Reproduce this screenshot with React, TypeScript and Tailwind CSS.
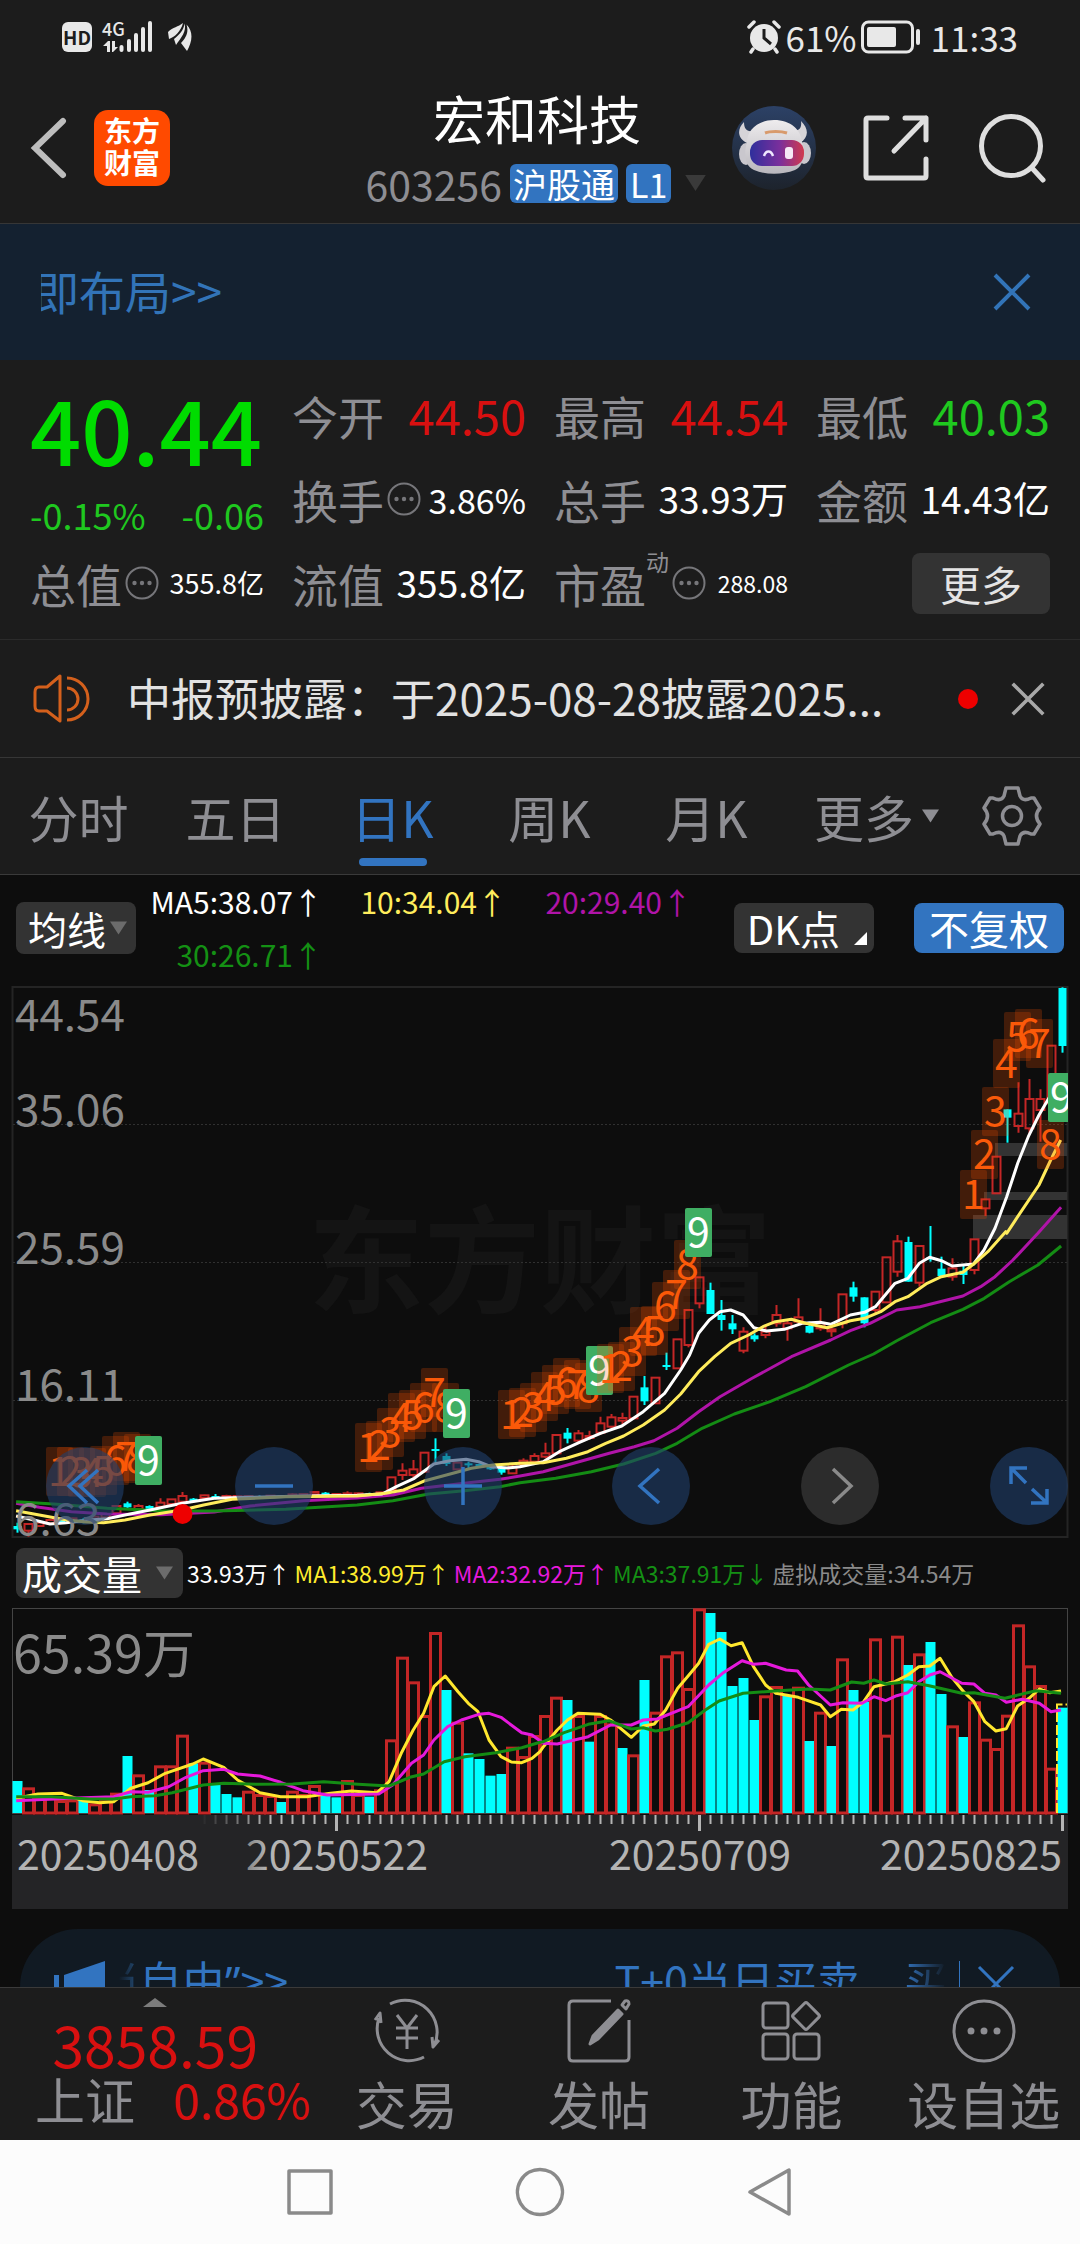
import React from "react";

/* ---------- chart data ---------- */

type Seg = { x: number; y: number; k: number; pts: number[][] };

// Turns line segments (origin, horizontal scale, points) into one SVG path.
const toPath = (segs: Seg[]) =>
  segs
    .flatMap((s) => s.pts.map(([px, py]) => [s.x + px / s.k, s.y + py / 3]))
    .map(([x, y], i) => `${i ? "L" : "M"}${x.toFixed(1)} ${y.toFixed(1)}`)
    .join("");

const A = (pts: number[][]): Seg => ({ x: 0, y: 1160, k: 2.8, pts });
const B = (pts: number[][]): Seg => ({ x: 520, y: 1160, k: 2.8, pts });
const C = (pts: number[][]): Seg => ({ x: 780, y: 970, k: 3, pts });
const D = (pts: number[][]): Seg => ({ x: 0, y: 1540, k: 2.904, pts });
const E = (pts: number[][]): Seg => ({ x: 540, y: 1540, k: 2.904, pts });

const priceLines = [
  {
    color: "#b014a8",
    d: toPath([
      A([[45, 1030], [110, 1042], [200, 1055], [300, 1062], [450, 1064], [600, 1056], [700, 1038], [850, 1022], [1000, 1014], [1100, 1005], [1180, 985], [1300, 970], [1400, 958]]),
      B([[0, 948], [65, 935], [150, 910], [250, 880], [320, 860], [375, 842], [440, 805], [500, 755], [560, 710], [650, 655], [760, 590], [870, 540], [925, 512], [980, 490], [1055, 450], [1120, 440], [1240, 408], [1290, 380], [1330, 350], [1380, 300], [1450, 220], [1515, 142]]),
    ]),
  },
  {
    color: "#148c14",
    d: toPath([
      A([[45, 1025], [150, 1032], [300, 1045], [450, 1052], [600, 1053], [800, 1048], [1000, 1035], [1100, 1022], [1200, 1002], [1300, 992], [1400, 980]]),
      B([[0, 968], [100, 955], [200, 935], [290, 912], [380, 880], [440, 850], [510, 805], [600, 762], [700, 725], [800, 680], [920, 615], [990, 582], [1055, 542], [1150, 488], [1240, 448], [1300, 415], [1370, 365], [1450, 315], [1515, 258]]),
    ]),
  },
  {
    color: "#ffffff",
    d: toPath([
      A([[45, 1068], [95, 1080], [140, 1092], [185, 1088], [250, 1080], [300, 1076], [350, 1065], [420, 1050], [510, 1030], [600, 1015], [700, 1012], [850, 1008], [1000, 1006], [1070, 1002], [1110, 980], [1160, 955], [1215, 912], [1260, 902], [1305, 898], [1340, 905], [1375, 920], [1420, 924]]),
      B([[0, 920], [65, 905], [110, 875], [165, 848], [225, 820], [285, 798], [345, 755], [405, 700], [450, 630], [475, 585], [500, 520], [530, 480], [560, 455], [590, 450], [625, 465], [655, 503], [690, 513], [740, 508], [790, 490], [840, 487], [870, 493], [925, 465], [965, 457], [995, 440], [1050, 370], [1086, 355], [1118, 310], [1147, 292], [1180, 302], [1210, 318], [1270, 312]]),
      C([[612, 840], [645, 775], [680, 680], [713, 580], [745, 500], [777, 435], [815, 370]]),
    ]),
  },
  {
    color: "#ffec5c",
    d: toPath([
      A([[45, 1052], [110, 1065], [175, 1078], [240, 1086], [290, 1088], [350, 1080], [420, 1065], [510, 1050], [570, 1035], [650, 1018], [800, 1010], [1000, 1008], [1080, 1000], [1130, 990], [1190, 962], [1250, 945], [1320, 925], [1380, 915]]),
      B([[0, 910], [65, 908], [130, 895], [190, 875], [240, 850], [290, 828], [345, 795], [405, 750], [450, 702], [500, 635], [545, 590], [590, 550], [640, 525], [680, 500], [715, 485], [760, 478], [800, 490], [860, 503], [925, 482], [965, 475], [1010, 455], [1050, 425], [1086, 410], [1140, 370], [1180, 350], [1240, 337], [1270, 312], [1310, 275], [1360, 215]]),
      C([[680, 790], [713, 740], [777, 645], [812, 570], [842, 510]]),
    ]),
  },
];

const volumeLines = [
  {
    color: "#ffe72e",
    d: toPath([
      D([[47, 775], [110, 762], [180, 760], [240, 782], [290, 788], [330, 785], [380, 745], [430, 728], [480, 700], [560, 672], [590, 657], [650, 682], [690, 720], [755, 758], [815, 770], [890, 770], [960, 760], [1020, 753], [1095, 758], [1130, 725], [1165, 640], [1200, 570], [1230, 520], [1260, 440], [1293, 408], [1330, 455], [1360, 490], [1388, 515], [1420, 600], [1455, 650], [1485, 666], [1515, 668], [1545, 655]]),
      E([[0, 635], [10, 620], [50, 570], [80, 540], [110, 520], [175, 523], [205, 540], [265, 592], [300, 558], [332, 552], [365, 510], [400, 445], [430, 408], [461, 370], [490, 313], [522, 297], [555, 317], [587, 308], [620, 380], [655, 435], [685, 460], [750, 472], [815, 495], [843, 530], [875, 508], [909, 510], [940, 485], [970, 440], [1030, 425], [1068, 405], [1100, 380], [1132, 378], [1162, 355], [1196, 412], [1230, 455], [1260, 485], [1292, 545], [1324, 573], [1354, 566], [1387, 498], [1420, 475], [1450, 447], [1480, 458], [1513, 453]]),
    ]),
  },
  {
    color: "#e619dc",
    d: toPath([
      D([[47, 782], [200, 775], [330, 770], [380, 755], [430, 757], [490, 740], [540, 712], [590, 692], [650, 688], [690, 702], [755, 708], [815, 727], [880, 752], [950, 765], [1100, 762], [1140, 735], [1195, 670], [1230, 645], [1260, 600], [1300, 560], [1340, 540], [1390, 523], [1420, 520], [1455, 532], [1515, 578], [1545, 585]]),
      E([[0, 602], [10, 610], [50, 612], [140, 590], [205, 555], [265, 555], [300, 540], [340, 537], [430, 500], [490, 435], [530, 400], [587, 362], [620, 373], [655, 370], [715, 390], [748, 393], [780, 435], [843, 495], [880, 488], [935, 490], [970, 470], [1004, 482], [1036, 467], [1068, 458], [1100, 425], [1132, 405], [1162, 395], [1225, 430], [1260, 432], [1292, 460], [1324, 465], [1354, 487], [1400, 478], [1450, 490], [1484, 515], [1513, 510]]),
    ]),
  },
  {
    color: "#148c14",
    d: toPath([
      D([[47, 770], [150, 770], [260, 777], [330, 777], [380, 770], [450, 767], [500, 758], [590, 735], [650, 730], [750, 733], [850, 732], [940, 725], [1040, 733], [1130, 738], [1190, 712], [1230, 702], [1290, 665], [1350, 650], [1440, 638], [1515, 623]]),
      E([[0, 607], [10, 605], [70, 578], [140, 553], [200, 542], [265, 567], [300, 563], [335, 573], [370, 568], [430, 548], [480, 510], [520, 483], [590, 460], [680, 453], [780, 447], [843, 450], [905, 426], [940, 430], [970, 420], [1005, 432], [1068, 425], [1130, 437], [1225, 460], [1260, 458], [1350, 475], [1440, 452], [1513, 460]]),
    ]),
  },
];

// [kind, high, body top, body bottom, low]; r = rising, c = falling
type Candle = [string, number, number, number, number];
const candles: Candle[] = [
  ["c", 1088, 1098, 1108, 1118], ["r", 1092, 1092, 1112, 1130], ["r", 1085, 1088, 1098, 1100], ["r", 1078, 1080, 1090, 1092],
  ["c", 1078, 1080, 1090, 1092], ["r", 1073, 1075, 1085, 1088], ["c", 1074, 1078, 1087, 1090], ["r", 1070, 1070, 1080, 1082],
  ["r", 1060, 1062, 1072, 1074], ["r", 1038, 1038, 1060, 1060], ["c", 1025, 1030, 1042, 1044], ["r", 1032, 1038, 1048, 1050],
  ["c", 1036, 1038, 1048, 1050], ["r", 1015, 1028, 1040, 1042], ["r", 1018, 1018, 1032, 1032], ["r", 996, 1008, 1025, 1026],
  ["c", 1014, 1016, 1024, 1026], ["r", 1004, 1006, 1014, 1016], ["c", 1002, 1008, 1014, 1018], ["r", 1004, 1008, 1014, 1016],
  ["r", 1006, 1008, 1014, 1016], ["r", 1006, 1008, 1013, 1014], ["c", 1006, 1008, 1013, 1014], ["r", 1005, 1007, 1012, 1014],
  ["c", 1005, 1007, 1012, 1014], ["r", 1000, 1003, 1010, 1012], ["r", 1000, 1002, 1009, 1010], ["r", 994, 996, 1003, 1005],
  ["c", 996, 998, 1004, 1006], ["r", 1000, 1002, 1008, 1010], ["r", 994, 1000, 1006, 1008], ["r", 998, 1000, 1006, 1008],
  ["c", 998, 1000, 1006, 1008], ["r", 995, 997, 1003, 1005], ["r", 952, 952, 990, 990], ["r", 910, 932, 945, 960],
  ["r", 900, 928, 945, 955], ["r", 878, 878, 935, 935], ["c", 835, 867, 873, 910], ["c", 880, 888, 912, 918],
  ["r", 906, 908, 928, 930], ["c", 905, 910, 916, 925], ["c", 910, 912, 920, 922], ["c", 915, 918, 928, 930],
  ["c", 920, 926, 938, 944], ["r", 915, 920, 940, 940], ["r", 895, 902, 915, 915], ["r", 880, 888, 905, 910],
  ["r", 848, 880, 890, 895], ["r", 825, 825, 880, 880], ["c", 804, 818, 836, 850], ["r", 810, 820, 842, 850],
  ["r", 812, 828, 834, 840], ["r", 770, 790, 818, 825], ["r", 762, 772, 800, 805], ["r", 758, 774, 782, 792],
  ["r", 710, 710, 775, 775], ["c", 648, 682, 724, 735], ["r", 653, 653, 730, 730], ["c", 578, 615, 621, 630],
  ["r", 538, 538, 625, 625], ["r", 450, 450, 555, 562], ["r", 352, 352, 430, 445], ["c", 368, 390, 462, 462],
  ["c", 420, 465, 480, 512], ["c", 465, 490, 508, 522], ["r", 502, 515, 572, 580], ["c", 520, 526, 538, 545],
  ["r", 495, 515, 525, 535], ["r", 435, 465, 490, 500], ["r", 480, 490, 505, 542], ["r", 415, 472, 485, 495],
  ["c", 485, 498, 518, 520], ["r", 445, 490, 505, 512], ["r", 490, 508, 514, 530], ["r", 403, 403, 490, 505],
  ["c", 365, 382, 410, 425], ["c", 412, 412, 490, 502], ["r", 395, 395, 450, 460], ["r", 292, 292, 427, 427],
  ["r", 225, 244, 335, 350], ["c", 230, 246, 365, 365], ["r", 258, 258, 368, 380], ["c", 198, 292, 298, 305],
  ["c", 290, 326, 348, 350], ["r", 295, 325, 350, 362], ["c", 318, 332, 345, 372], ["r", 238, 238, 330, 343],
  ["r", 118, 118, 145, 168], ["r", -10, -10, 100, 100], ["c", -152, -152, -127, -52], ["r", -233, -139, -102, -82],
  ["r", -243, -183, -95, -80], ["r", -212, -183, -150, -55], ["r", -343, -343, -170, -170], ["c", -518, -516, -342, -322],
];

const volumes =
  "c723 r742 r770 r772 r780 r778 c780 r790 r778 r758 c648 r703 c750 r676 r676 r584 c670 r665 c735 c762 c772 r752 r762 r765 c786 r752 r762 r735 c768 c772 r720 r762 c770 r748 r598 r350 r424 r525 r276 c450 r545 c640 c657 c707 c702 r620 r648 r585 r525 r470 c480 r525 c605 r525 r550 c624 r643 c420 r515 r346 r334 r444 r205 c219 c276 c438 c414 c540 r466 r438 c465 r440 c603 r515 c618 r355 c450 c485 r295 r584 r287 c375 r340 c306 c462 r556 c591 r484 r596 r624 r524 r253 r376 r435 r683 c503"
    .split(" ")
    .map((v) => ({ up: v[0] === "r", y: 1540 + Number(v.slice(1)) / 3 }));

// [label, left, top]
const marks: [string, number, number][] = [
  ["1", 46, 1447], ["2", 57, 1447], ["3", 68, 1448], ["4", 79, 1448], ["5", 90, 1446], ["6", 102, 1436], ["7", 113, 1432], ["8", 124, 1434], ["9", 135, 1436],
  ["1", 355, 1423], ["2", 366, 1421], ["3", 377, 1408], ["4", 388, 1393], ["5", 399, 1390], ["6", 410, 1383], ["7", 421, 1368], ["8", 432, 1383], ["9", 443, 1389],
  ["1", 498, 1390], ["2", 509, 1388], ["3", 520, 1383], ["4", 531, 1372], ["5", 542, 1365], ["6", 553, 1358], ["7", 564, 1360], ["8", 575, 1363], ["9", 586, 1346],
  ["1", 597, 1344], ["2", 608, 1342], ["3", 619, 1327], ["4", 630, 1307], ["5", 641, 1306], ["6", 652, 1282], ["7", 663, 1270], ["8", 674, 1240], ["9", 685, 1208],
  ["1", 960, 1170], ["2", 971, 1130], ["3", 982, 1087], ["4", 993, 1039], ["5", 1004, 1012], ["6", 1015, 1009], ["7", 1026, 1019], ["8", 1037, 1120], ["9", 1048, 1073],
];

const barX = (i: number) => 17.5 + i * 11;

/* ---------- small pieces ---------- */

const Down = ({ className }: { className: string }) => (
  <svg viewBox="0 0 18 14" className={className} aria-hidden="true">
    <path d="M0 0H18L9 14Z" fill="currentColor" />
  </svg>
);

const Cross = ({ className, w }: { className: string; w: number }) => (
  <svg viewBox="0 0 40 40" className={className} aria-hidden="true">
    <path d="M3 3L37 37M37 3L3 37" stroke="currentColor" strokeWidth={w} fill="none" />
  </svg>
);

const Info = () => (
  <svg viewBox="0 0 34 34" className="ml-[3px] size-[34px] shrink-0 text-[#76767a]" aria-hidden="true">
    <circle cx="17" cy="17" r="15.5" fill="none" stroke="currentColor" strokeWidth="2" />
    <circle cx="9.500" cy="17" r="2.200" fill="currentColor" />
    <circle cx="17" cy="17" r="2.200" fill="currentColor" />
    <circle cx="24.500" cy="17" r="2.200" fill="currentColor" />
  </svg>
);

function Cell({ label, value, tone = "text-white text-[37px]", info, sup }: { label: string; value: string; tone?: string; info?: boolean; sup?: string }) {
  return (
    <div className="flex items-center justify-between">
      <span className="flex items-center whitespace-nowrap text-[46px] text-[#8e8e93]">
        {label}
        {sup && <sup className="top-0 self-start text-[23px] leading-6">{sup}</sup>}
        {info && <Info />}
      </span>
      <span className={`whitespace-nowrap ${tone}`}>{value}</span>
    </div>
  );
}

function StatusBar() {
  return (
    <div className="flex h-[73px] items-center justify-between pl-[62px] pr-[62px] text-[35px] leading-[48px] text-[#e8e8e8]">
      <div className="flex items-center">
        <span className="flex size-[30px] items-center justify-center rounded-md bg-[#e8e8e8] text-[19px] font-bold leading-none text-[#1c1c1c]">HD</span>
        <svg viewBox="103 20 50 34" className="ml-[11px] h-[34px] w-[50px] overflow-visible" aria-label="4G 信号">
          <text x="102" y="36" fontSize="18" fontWeight="500" fill="#e8e8e8">4G</text>
          <g fill="#e8e8e8">
            <path d="M103 46L108 41H110V52H107V46Z M112 41H115V47H118L113 52H112Z" />
            <rect x="119.500" y="45" width="4" height="7" rx="2" />
            <rect x="127" y="39" width="4" height="13" rx="2" />
            <rect x="134" y="33" width="4" height="19" rx="2" />
            <rect x="141" y="27" width="4" height="25" rx="2" />
            <rect x="148" y="21" width="4" height="31" rx="2" />
          </g>
        </svg>
        <svg viewBox="0 0 26 30" className="ml-[14px] h-[30px] w-[26px]" fill="#e8e8e8" aria-hidden="true">
          <path d="M1 10C6 5 11 5 16 1C14 9 8 15 2 17Z" />
          <path d="M17.500 1.500C20 9 14 16 9 23L7 17C12 13 17 8 17.500 1.500Z" />
          <path d="M19.500 2.500C27 10 25 20 20 29L14 21C19 16 22 10 19.500 2.500Z" />
        </svg>
      </div>
      <div className="flex items-center">
        <svg viewBox="0 0 34 34" className="size-[34px]" aria-label="闹钟">
          <circle cx="17" cy="18" r="14" fill="#e8e8e8" />
          <path d="M2 7L7 2M32 7L27 2M6 29L4 32M28 29L30 32" stroke="#e8e8e8" strokeWidth="3.500" strokeLinecap="round" />
          <path d="M17 9V18L24 24" stroke="#1c1c1c" strokeWidth="3" fill="none" />
        </svg>
        <span className="ml-1">61%</span>
        <svg viewBox="0 0 60 34" className="ml-1 h-[34px] w-[60px]" aria-label="电池">
          <rect x="1.500" y="2" width="50" height="30" rx="6" fill="none" stroke="#e8e8e8" strokeWidth="3" />
          <rect x="6" y="7" width="29" height="20" rx="2" fill="#e8e8e8" />
          <rect x="55" y="9" width="4" height="16" rx="2" fill="#e8e8e8" />
        </svg>
        <span className="ml-[10px]">11:33</span>
      </div>
    </div>
  );
}

function Robot() {
  return (
    <svg viewBox="0 0 84 84" className="size-[84px]" aria-hidden="true">
      <defs>
        <linearGradient id="sky" x1="0" y1="0" x2="0" y2="1"><stop offset="0" stopColor="#2c4166" /><stop offset="1" stopColor="#1d232c" /></linearGradient>
        <linearGradient id="visor" x1="0" y1="0" x2="1" y2="0"><stop offset="0" stopColor="#2f2f9c" /><stop offset="0.550" stopColor="#7a2f9c" /><stop offset="1" stopColor="#d0394e" /></linearGradient>
        <linearGradient id="fur" x1="0" y1="0" x2="0" y2="1"><stop offset="0" stopColor="#eeecee" /><stop offset="1" stopColor="#b9b7bd" /></linearGradient>
      </defs>
      <circle cx="42" cy="42" r="42" fill="url(#sky)" />
      <path d="M12 16C5 23 5 32 15 37L24 24C16 27 12 24 12 16ZM69 15C77 23 77 31 68 37L59 24C67 26 70 22 69 15Z" fill="#d6d4d8" />
      <ellipse cx="14" cy="48" rx="7" ry="11" fill="#c9c7cd" />
      <ellipse cx="72" cy="47" rx="7" ry="11" fill="#c9c7cd" />
      <path d="M15 36C15 24 26 14 42 14C59 14 69 24 70 36C74 46 72 60 63 64C50 69 34 69 22 64C12 60 12 46 15 36Z" fill="url(#fur)" />
      <rect x="18" y="34" width="54" height="26" rx="12" fill="url(#visor)" />
      <path d="M32 50C34 44 39 44 41 50" fill="none" stroke="#f0e8ff" strokeWidth="2.500" />
      <rect x="53" y="41" width="8" height="12" rx="3" fill="#f5e8f5" />
      <path d="M33 27C38 25 49 25 55 27" stroke="#d89a6c" strokeWidth="3" fill="none" />
    </svg>
  );
}

function Header() {
  return (
    <header className="grid h-[151px] grid-cols-[1fr_auto_1fr] items-center border-b border-[#363636] pl-7 pr-[34px]">
      <div className="flex items-center gap-6">
        <button aria-label="返回" className="h-[62px] w-[42px]">
          <svg viewBox="0 0 42 62" className="h-full w-full"><path d="M35 4L7 31L35 58" fill="none" stroke="#bdbdbd" strokeWidth="6" strokeLinecap="round" /></svg>
        </button>
        <a href="#home" className="flex size-[76px] flex-col items-center justify-center rounded-[14px] bg-[#ff4a00] pb-1 text-[28px] font-bold leading-8 text-white">
          <span>东方</span>
          <span>财富</span>
        </a>
      </div>
      <div className="flex flex-col items-center">
        <h1 className="text-[52px] leading-[70px] text-white">宏和科技</h1>
        <div className="flex items-center">
          <span className="mr-2 text-[41px] leading-[60px] text-[#8e8e93]">603256</span>
          <span className="rounded-md bg-[#3274c0] px-[3px] text-[34px] leading-[39px] text-white">沪股通</span>
          <span className="ml-2 rounded-md bg-[#3274c0] px-1 text-[34px] leading-[39px] text-white">L1</span>
          <Down className="ml-3 h-4 w-[25px] text-[#3a3a3a]" />
        </div>
      </div>
      <div className="flex items-center justify-end">
        <button aria-label="智能助手"><Robot /></button>
        <button aria-label="分享" className="ml-[46px]">
          <svg viewBox="0 0 68 68" className="size-[68px]" fill="none" stroke="#dedede" strokeWidth="5" strokeLinecap="round" strokeLinejoin="round">
            <path d="M25 4H6Q4 4 4 6V62Q4 64 6 64H62Q64 64 64 62V45M43 4H64V26M64 4L32 37" />
          </svg>
        </button>
        <button aria-label="搜索" className="ml-12">
          <svg viewBox="0 0 68 70" className="h-[70px] w-[68px]" fill="none" stroke="#dedede" strokeWidth="5" strokeLinecap="round">
            <circle cx="33" cy="33" r="29.5" /><path d="M54 55L65 67" />
          </svg>
        </button>
      </div>
    </header>
  );
}

function Quote() {
  return (
    <section className="grid auto-rows-[84px] grid-cols-4 gap-x-7 border-b border-[#2b2b2b] px-[30px] pb-[14px] pt-[13px]">
      <div className="row-span-2 flex flex-col items-start">
        <strong className="text-[90px] font-medium leading-[108px] text-[#00dc00]">40.44</strong>
        <div className="mt-2 flex w-full justify-between text-[36px] leading-[50px] text-[#1fc81f]">
          <span>-0.15%</span>
          <span>-0.06</span>
        </div>
      </div>
      <Cell label="今开" value="44.50" tone="text-[47px] text-[#d81010]" />
      <Cell label="最高" value="44.54" tone="text-[47px] text-[#d81010]" />
      <Cell label="最低" value="40.03" tone="text-[47px] text-[#1fc81f]" />
      <Cell label="换手" value="3.86%" tone="text-[34px] text-white" info />
      <Cell label="总手" value="33.93万" />
      <Cell label="金额" value="14.43亿" />
      <Cell label="总值" value="355.8亿" tone="text-[27px] text-white" info />
      <Cell label="流值" value="355.8亿" />
      <Cell label="市盈" value="288.08" tone="text-[23px] text-white" sup="动" info />
      <div className="flex items-center justify-end">
        <button className="rounded-lg bg-[#333333] px-7 text-[41px] leading-[61px] text-[#e4e4e4]">更多</button>
      </div>
    </section>
  );
}

function Notice() {
  return (
    <section className="flex h-[118px] items-center border-b border-[#363636] pl-[33px] pr-[34px]">
      <svg viewBox="0 0 58 50" className="h-[50px] w-[58px] shrink-0" fill="none" stroke="#d4601c" strokeWidth="3" aria-hidden="true">
        <path d="M27 2V47L14 37H6Q2 37 2 32V18Q2 13 6 13H14ZM34 4A21 21 0 0 1 34 46M34 14A11 11 0 0 1 34 36" strokeLinejoin="round" />
      </svg>
      <a href="#notice" className="ml-9 whitespace-nowrap pb-1 text-[44px] text-[#e2e2e2]">中报预披露：于2025-08-28披露2025...</a>
      <span className="ml-auto size-5 shrink-0 rounded-full bg-[#ee0000]" />
      <button aria-label="关闭公告" className="ml-8"><Cross className="size-9 text-[#a8a8a8]" w={4} /></button>
    </section>
  );
}

function Tabs() {
  return (
    <nav className="grid h-[117px] grid-cols-[repeat(5,157fr)_183fr_112fr] border-b border-[#3a3a3a] text-[50px] text-[#8e8e93]">
      {["分时", "五日", "日K", "周K", "月K"].map((t) => (
        <button key={t} className={t === "日K" ? "relative text-[#3274c0]" : "relative"}>
          {t}
          {t === "日K" && <span className="absolute bottom-2 left-1/2 h-2 w-[68px] -translate-x-1/2 rounded bg-[#3274c0]" />}
        </button>
      ))}
      <button className="flex items-center justify-center gap-2">
        更多
        <Down className="h-[14px] w-[17px]" />
      </button>
      <button aria-label="设置" className="flex items-center pl-3">
        <svg viewBox="-32 -32 64 64" className="size-16" fill="none" stroke="#8e8e93" strokeWidth="3.500" strokeLinejoin="round">
          <path d="M-6-28H6L8-20Q11-14 19-18L22-18L28-8Q21 0 28 8L22 18L19 18Q11 14 8 20L6 28H-6L-8 20Q-11 14-19 18L-22 18L-28 8Q-21 0-28-8L-22-18L-19-18Q-11-14-8-20Z" />
          <circle r="9.5" />
        </svg>
      </button>
    </nav>
  );
}

function Averages() {
  return (
    <div className="flex items-center pb-[5px] pl-4 pr-4">
      <button className="flex items-center gap-1 rounded-lg bg-[#333333] pl-3 pr-[9px] text-[39px] leading-[52px] text-white">
        均线
        <Down className="h-[14px] w-[17px] text-[#6c6c6c]" />
      </button>
      <div className="grid grid-cols-[187px_184px_185px] text-right text-[30px] leading-[53px]">
        <span className="text-white">MA5:38.07↑</span>
        <span className="text-[#ffec5c]">10:34.04↑</span>
        <span className="text-[#b014a8]">20:29.40↑</span>
        <span className="text-[#149014]">30:26.71↑</span>
      </div>
      <button className="relative ml-auto rounded-lg bg-[#333333] pl-[13px] pr-[34px] text-[40px] leading-[50px] text-white">
        DK点
        <svg viewBox="0 0 13 13" className="absolute bottom-2 right-[7px] size-[13px]" aria-hidden="true"><path d="M13 0V13H0Z" fill="#fff" /></svg>
      </button>
      <button className="ml-10 rounded-lg bg-[#3274c0] px-[15px] text-[40px] leading-[50px] text-white">不复权</button>
    </div>
  );
}

function PriceChart() {
  return (
    <svg viewBox="0 986 1080 552" className="block h-auto w-full" role="img" aria-label="日K线图">
      <rect x="12.500" y="987" width="1055" height="550" fill="none" stroke="#242424" strokeWidth="2" />
      <text x="540" y="1304" fontSize="116" fontWeight="700" textAnchor="middle" fill="#141414">东方财富</text>
      {[1124.5, 1262.5, 1400.5].map((y) => (
        <path key={y} d={`M13 ${y}H1067`} stroke="#303030" strokeDasharray="2 2" />
      ))}
      <g fill="#333333">
        <rect x="995" y="1143" width="72" height="13" />
        <rect x="984" y="1192" width="83" height="8" />
        <rect x="973" y="1215" width="94" height="24" />
      </g>
      {candles.map(([kind, hi, top, bottom, lo], i) => {
        const x = barX(i);
        const [h, t, b, l] = [hi, top, bottom, lo].map((v) => 1160 + v / 3);
        return kind === "c" ? (
          <g key={i} fill="#00ffff">
            <rect x={x - 1} y={h} width="2" height={l - h} />
            <rect x={x - 4} y={t} width="8" height={Math.max(b - t, 2)} />
          </g>
        ) : (
          <g key={i} stroke="#c42626" strokeWidth="2" fill="none">
            <path d={`M${x} ${h}V${t}M${x} ${b}V${l}`} />
            <rect x={x - 4} y={t} width="8" height={Math.max(b - t, 1)} />
          </g>
        );
      })}
      {priceLines.map((l) => (
        <path key={l.color} d={l.d} fill="none" stroke={l.color} strokeWidth="3" strokeLinejoin="round" />
      ))}
      <g fontSize="44" fill="#8a8a8a">
        <text x="15" y="1031">44.54</text>
        <text x="15" y="1126">35.06</text>
        <text x="15" y="1264">25.59</text>
        <text x="15" y="1401">16.11</text>
        <text x="15" y="1535">6.63</text>
      </g>
      <clipPath id="frame"><rect x="12" y="986" width="1056" height="552" /></clipPath>
      <g clipPath="url(#frame)" fontSize="41" textAnchor="middle">
        {marks.map(([n, x, y], i) => (
          <g key={i}>
            <rect x={x} y={y} width="27" height="49" rx="2" fill={n === "9" ? "#3fae63" : "#ff5000"} fillOpacity={n === "9" ? 1 : 0.22} />
            <text x={x + 13.5} y={y + 39} fill={n === "9" ? "#ffffff" : "#fa5a0a"}>{n}</text>
          </g>
        ))}
      </g>
      <circle cx="182.500" cy="1514" r="10" fill="#ee0000" />
    </svg>
  );
}

function ChartControls() {
  const items = [
    { name: "最早", d: "M41 23L23 39L41 56M52 23L34 39L52 56" },
    { name: "缩小", d: "M20 39H58" },
    { name: "放大", d: "M20 39H58M39 20V58" },
    { name: "向左", d: "M47 22L28 39L47 56" },
    { name: "向右", d: "M32 22L50 39L32 56", off: true },
    { name: "全屏", d: "M21 37V21H37M21 21L36 36M57 42V56H41M57 56L42 42" },
  ];
  return (
    <div className="absolute inset-x-0 bottom-[13px] flex justify-between pl-[46px] pr-3">
      {items.map((it) => (
        <button key={it.name} aria-label={it.name} className={it.off ? "size-[78px] rounded-full bg-[#2c2c2c] text-[#8a8a8a]" : "size-[78px] rounded-full bg-[#20406d]/60 text-[#3274c0]"}>
          <svg viewBox="0 0 78 78" className="h-full w-full"><path d={it.d} fill="none" stroke="currentColor" strokeWidth="3.500" /></svg>
        </button>
      ))}
    </div>
  );
}

function VolumeHeader() {
  return (
    <div className="flex h-[70px] items-center gap-1 whitespace-nowrap pl-4 text-[23px]">
      <button className="flex items-center rounded-lg bg-[#333333] pl-[6px] pr-[10px] text-[40px] leading-[50px] text-white">
        成交量
        <Down className="ml-[14px] h-[14px] w-[17px] text-[#6c6c6c]" />
      </button>
      <span className="text-white">33.93万↑</span>
      <span className="text-[#ffec2e]">MA1:38.99万↑</span>
      <span className="text-[#e619dc]">MA2:32.92万↑</span>
      <span className="text-[#149014]">MA3:37.91万↓</span>
      <span className="text-[#8a8a8a]">虚拟成交量:34.54万</span>
    </div>
  );
}

function VolumeChart() {
  return (
    <svg viewBox="0 1608 1080 302" className="block h-auto w-full" role="img" aria-label="成交量图">
      <defs>
        <linearGradient id="fade" x1="0" y1="0" x2="1" y2="0"><stop offset="0" stopColor="#242426" /><stop offset="1" stopColor="#242426" stopOpacity="0" /></linearGradient>
      </defs>
      <rect x="12.500" y="1608.500" width="1055" height="205" fill="none" stroke="#444444" />
      {volumes.map((v, i) => {
        const x = barX(i);
        return v.up ? (
          <rect key={i} x={x - 5} y={v.y + 1.5} width="10" height={1811.5 - v.y} fill="none" stroke="#c42626" strokeWidth="3" />
        ) : (
          <rect key={i} x={x - 5} y={v.y} width="10" height={1813 - v.y} fill="#00ffff" />
        );
      })}
      <path d="M1057 1813V1704.500H1067" fill="none" stroke="#ffe72e" strokeWidth="2" strokeDasharray="10 3" />
      {volumeLines.map((l) => (
        <path key={l.color} d={l.d} fill="none" stroke={l.color} strokeWidth="3" strokeLinejoin="round" />
      ))}
      <text x="13" y="1673" fontSize="52" fill="#8a8a8a">65.39万</text>
      <rect x="12" y="1815" width="1056" height="94" fill="#242426" />
      {Array.from({ length: 79 }, (_, k) => {
        const i = k + 17;
        const major = i === 29 || i === 62 || i === 95;
        return <rect key={i} x={barX(i) - (major ? 1.5 : 1)} y="1815" width={major ? 3 : 2} height={major ? 16 : 9} fill="#b4b4b4" />;
      })}
      <g fontSize="41" fill="#b4b4b4">
        <text x="246" y="1870">20250522</text>
        <rect x="200" y="1815" width="68" height="94" fill="url(#fade)" />
        <text x="17" y="1870">20250408</text>
        <text x="609" y="1870">20250709</text>
        <text x="1062" y="1870" textAnchor="end">20250825</text>
      </g>
    </svg>
  );
}

function Promo() {
  return (
    <div className="mt-[19px] h-[58px] overflow-hidden px-5">
      <div className="flex h-[116px] items-start whitespace-nowrap rounded-[58px] bg-[#111a23] pl-[33px] pr-[44px] pt-6 text-[43px] leading-[52px] text-[#3274c0]">
        <svg viewBox="0 0 52 48" className="mt-2 h-12 w-[52px] shrink-0" fill="currentColor" aria-hidden="true">
          <rect x="1" y="14" width="5" height="34" /><path d="M11 14L52 0V48H11Z" />
        </svg>
        <a href="#promo" className="ml-[14px] flex min-w-0 flex-1 overflow-hidden">
          <span className="flex w-5 shrink-0 justify-end overflow-hidden bg-gradient-to-r from-[#111a23] to-[#23507f] bg-clip-text text-transparent">当</span>
          <span>自由<span className="font-['Noto_Sans',sans-serif]">”</span>&gt;&gt;</span>
          <span className="ml-auto">T+0当日买卖</span>
          <span className="ml-11 mr-3 bg-gradient-to-r from-[#3274c0] to-[#111a23] bg-clip-text text-transparent">买</span>
        </a>
        <span className="mt-2 h-20 w-px bg-[#3274c0]" />
        <button aria-label="关闭推广" className="ml-4 mt-2"><Cross className="h-[46px] w-10" w={3} /></button>
      </div>
    </div>
  );
}

function BottomBar() {
  const items = [
    {
      name: "交易",
      icon: (
        <>
          <path d="M18 8A32 32 0 0 1 62 50M52 61A32 32 0 0 1 7 22M3 24L8 17L9 27M67 44L61 51L60 41" />
          <path d="M25 19L35 32L45 19M35 32V53M24 32H46M24 42H46" />
        </>
      ),
    },
    {
      name: "发帖",
      icon: (
        <>
          <path d="M47 5H9Q5 5 5 9V61Q5 65 9 65H61Q65 65 65 61V24" />
          <path d="M58 9L61 5Q65 4 65 8L62 13Z" />
          <path d="M54 14L58 18L34 43L26 48L29 40Z" fill="currentColor" />
        </>
      ),
    },
    {
      name: "功能",
      icon: (
        <>
          <rect x="7" y="7" width="25" height="25" rx="3" />
          <rect x="7" y="38" width="25" height="25" rx="3" />
          <rect x="38" y="38" width="25" height="25" rx="3" />
          <rect x="40" y="10" width="20" height="20" rx="2" transform="rotate(45 50 20)" />
        </>
      ),
    },
    {
      name: "设自选",
      icon: (
        <>
          <circle cx="35" cy="35" r="30" />
          <g fill="currentColor" stroke="none"><circle cx="22" cy="35" r="3.500" /><circle cx="35" cy="35" r="3.500" /><circle cx="48" cy="35" r="3.500" /></g>
        </>
      ),
    },
  ];
  return (
    <nav className="grid grid-cols-[310fr_repeat(4,192fr)] border-t border-[#3a3a3a] bg-[#1c1c1c] text-[#8e8e93]">
      <button className="flex flex-col items-center justify-start pt-[10px]">
        <svg viewBox="0 0 24 9" className="h-[9px] w-6" aria-hidden="true"><path d="M0 9L12 0L24 9Z" fill="#7c7c7c" /></svg>
        <span className="mt-1 text-[57px] leading-[64px] text-[#d81010]">3858.59</span>
        <span className="flex w-full justify-between whitespace-nowrap pl-[35px] text-[50px] leading-[46px]">
          上证
          <span className="text-[48px] text-[#d81010]">0.86%</span>
        </span>
      </button>
      {items.map((it) => (
        <button key={it.name} className="flex flex-col items-center whitespace-nowrap pt-2 text-[51px] leading-[74px]">
          <svg viewBox="0 0 70 70" className="size-[70px]" fill="none" stroke="currentColor" strokeWidth="3" strokeLinejoin="round" aria-hidden="true">{it.icon}</svg>
          {it.name}
        </button>
      ))}
    </nav>
  );
}

function SystemBar() {
  return (
    <div className="flex h-[104px] items-center justify-center gap-[178px] bg-[#fcfcfc] text-[#8a8a8a]">
      {[
        { name: "最近任务", d: "M5 5H47V47H5Z" },
        { name: "主屏幕", d: "M26 3.500A22.500 22.500 0 1 1 25.900 3.500Z" },
        { name: "系统返回", d: "M45 4V48L6 26Z" },
      ].map((b) => (
        <button key={b.name} aria-label={b.name} className="size-[52px]">
          <svg viewBox="0 0 52 52" className="h-full w-full"><path d={b.d} fill="none" stroke="currentColor" strokeWidth="3.500" strokeLinejoin="round" /></svg>
        </button>
      ))}
    </div>
  );
}

export default function App() {
  return (
    <div className="bg-[#1c1c1c] font-['Noto_Sans_CJK_SC',sans-serif]">
      <StatusBar />
      <Header />
      <div className="flex h-[136px] items-center justify-between bg-[#142130] pl-[41px] pr-12 text-[46px] text-[#3274b8]">
        <a href="#layout" className="flex overflow-hidden whitespace-nowrap pb-1">
          <span className="-ml-2">即布局&gt;&gt;</span>
        </a>
        <button aria-label="关闭横幅"><Cross className="size-10" w={4} /></button>
      </div>
      <Quote />
      <Notice />
      <Tabs />
      <main className="bg-[#0d0d0d]">
        <Averages />
        <div className="relative">
          <PriceChart />
          <ChartControls />
        </div>
        <VolumeHeader />
        <VolumeChart />
        <Promo />
      </main>
      <BottomBar />
      <SystemBar />
    </div>
  );
}
